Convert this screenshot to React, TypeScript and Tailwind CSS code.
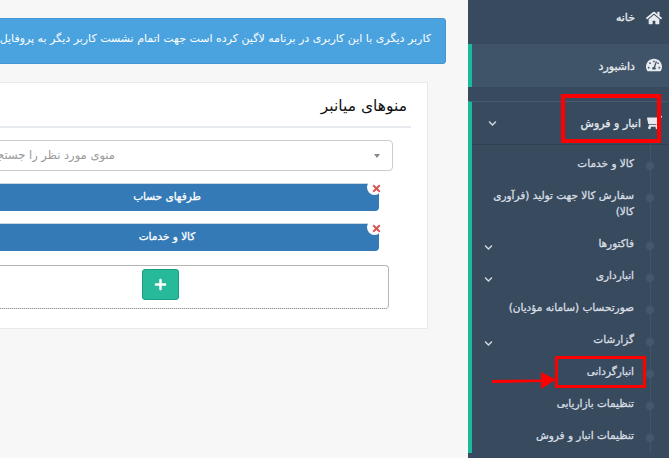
import { FaHome, FaTachometerAlt, FaShoppingCart, FaChevronDown, FaPlus, FaTimes } from "react-icons/fa";

function Sub({ label, chevron, h }: { label: string; chevron?: boolean; h: string }) {
  return (
    <div className={`relative ${h} pt-[5px]`}>
      <span className="absolute left-[174px] top-[12px] h-[8px] w-[8px] rounded-full bg-[#44586c]" />
      <div className="ml-[14px] w-[148px] text-right text-[10.5px] leading-[16px] text-[#d9dee3] [-webkit-text-stroke:0.3px_#d9dee3]" dir="rtl">
        {label}
      </div>
      {chevron && <FaChevronDown size={9} className="absolute left-[12px] top-[13px] text-[#d3d8de]" />}
    </div>
  );
}

function Shortcut({ label }: { label: string }) {
  return (
    <div className="relative mt-[12px] mr-[32px] flex h-[28px] w-[424px] items-center justify-center rounded-b-[4px] rounded-tl-[4px] border-t border-[#ccd4dc] bg-[#337ab7] pb-[2px] text-[10.5px] text-white [-webkit-text-stroke:0.3px_#fff]">
      {label}
      <span className="absolute -top-[4px] -right-[3px] h-[15px] w-[15px] rounded-full bg-white" />
      <FaTimes size={11} className="absolute top-[-1px] right-[-3px] text-[#d9534f]" />
    </div>
  );
}

export default function App() {
  return (
    <div className="relative flex h-[458px] w-[669px] overflow-hidden bg-[#f7f7f7] [font-family:'DejaVu_Sans',sans-serif]">
      <main className="flex w-[468px] shrink-0 flex-col items-start overflow-hidden pt-[18px]" dir="rtl">
        <div className="mr-[22px] flex h-[46px] w-[600px] shrink-0 items-center rounded-[3px] border border-[#4596d3] bg-[#4aa3df] pr-[14px] pb-[3px] text-[11px] whitespace-nowrap text-white">
          کاربر دیگری با این کاربری در برنامه لاگین کرده است جهت اتمام نشست کاربر دیگر به پروفایل کاربری خود بروید
        </div>
        <section className="mt-[18px] mr-[40px] h-[247px] w-[600px] shrink-0 border border-[#e6e9ed] bg-white pt-[12px] pr-[16px]">
          <h2 className="h-[33px] border-b-2 border-[#e6e9ed] pr-[4px] text-[15.5px] leading-[22px] text-[#111]">منوهای میانبر</h2>
          <div className="mt-[12px] mr-[18px] flex h-[31px] w-[566px] items-center rounded-[4px] border border-[#ccc] pr-[12px] text-[11.5px] whitespace-nowrap text-[#999]">
            <span className="h-0 w-0 border-x-[3.5px] border-t-[4px] border-x-transparent border-t-[#888]" />
            <span className="mr-[259px]">منوی مورد نظر را جستجو کنید</span>
          </div>
          <Shortcut label="طرفهای حساب" />
          <Shortcut label="کالا و خدمات" />
          <div className="mt-[14px] mr-[22px] flex h-[44px] w-[458px] justify-center rounded-[4px] border border-[#b5b5b5] [border-bottom-style:dotted] border-b-[#777] pt-[3px]">
            <button className="flex h-[31px] w-[37px] items-center justify-center rounded-[3px] border border-[#169f85] bg-[#26b99a] text-white">
              <FaPlus size={13} />
            </button>
          </div>
        </section>
      </main>
      <aside className="relative h-full w-[201px] shrink-0 bg-[#374a5e]">
        <div className="absolute top-[140px] bottom-[5px] left-[182px] w-px bg-[#425569]" />
        <div className="flex h-[44px] items-center justify-end gap-[11px] pr-[7px] pb-[8px] text-[11px] text-[#e7ebef] [-webkit-text-stroke:0.3px_#e7ebef]">
          <span>خانه</span>
          <FaHome size={16} />
        </div>
        <div className="flex h-[43px] items-center justify-end gap-[11px] border-l-4 border-[#1abb9c] bg-[#3f5468] pr-[7px] text-[11px] text-[#e7ebef] [-webkit-text-stroke:0.3px_#e7ebef]">
          <span className="pt-[3px]">داشبورد</span>
          <FaTachometerAlt size={16} className="-mt-[1px]" />
        </div>
        <div className="mt-[14px] h-[352px] border-t border-[#465a6e] border-l-4 border-l-[#1abb9c]">
          <div className="relative flex h-[43px] items-center justify-end gap-[6px] border-b border-[#2f4153] pr-[7px] text-[11px] text-[#e7ebef] [-webkit-text-stroke:0.3px_#e7ebef]">
            <FaChevronDown size={9} className="absolute left-[16px] top-[17px] text-[#d3d8de]" />
            <span className="pt-[2px]">انبار و فروش</span>
            <FaShoppingCart size={15} className="-mt-[1px] -scale-x-100" />
          </div>
          <div className="pt-[5px]">
            <Sub label="کالا و خدمات" h="h-[32px]" />
            <Sub label="سفارش کالا جهت تولید (فرآوری کالا)" h="h-[48px]" />
            <Sub label="فاکتورها" chevron h="h-[32px]" />
            <Sub label="انبارداری" chevron h="h-[32px]" />
            <Sub label="صورتحساب (سامانه مؤدیان)" h="h-[32px]" />
            <Sub label="گزارشات" chevron h="h-[32px]" />
            <Sub label="انبارگردانی" h="h-[32px]" />
            <Sub label="تنظیمات بازاریابی" h="h-[32px]" />
            <Sub label="تنظیمات انبار و فروش" h="h-[32px]" />
          </div>
        </div>
      </aside>
      <div className="absolute top-[94px] left-[561px] h-[49px] w-[100px] border-[4px] border-[#fe0000]" />
      <div className="absolute top-[356px] left-[555px] h-[32px] w-[91px] border-[3px] border-[#fe0000]" />
      <svg className="absolute top-[370px] left-[490px]" width="70" height="20" viewBox="0 0 70 20">
        <path d="M2 10 L51 9.5 L51 2 L66 9.5 L51 19 L51 12 L2 13 Z" fill="#fe0000" />
      </svg>
    </div>
  );
}
